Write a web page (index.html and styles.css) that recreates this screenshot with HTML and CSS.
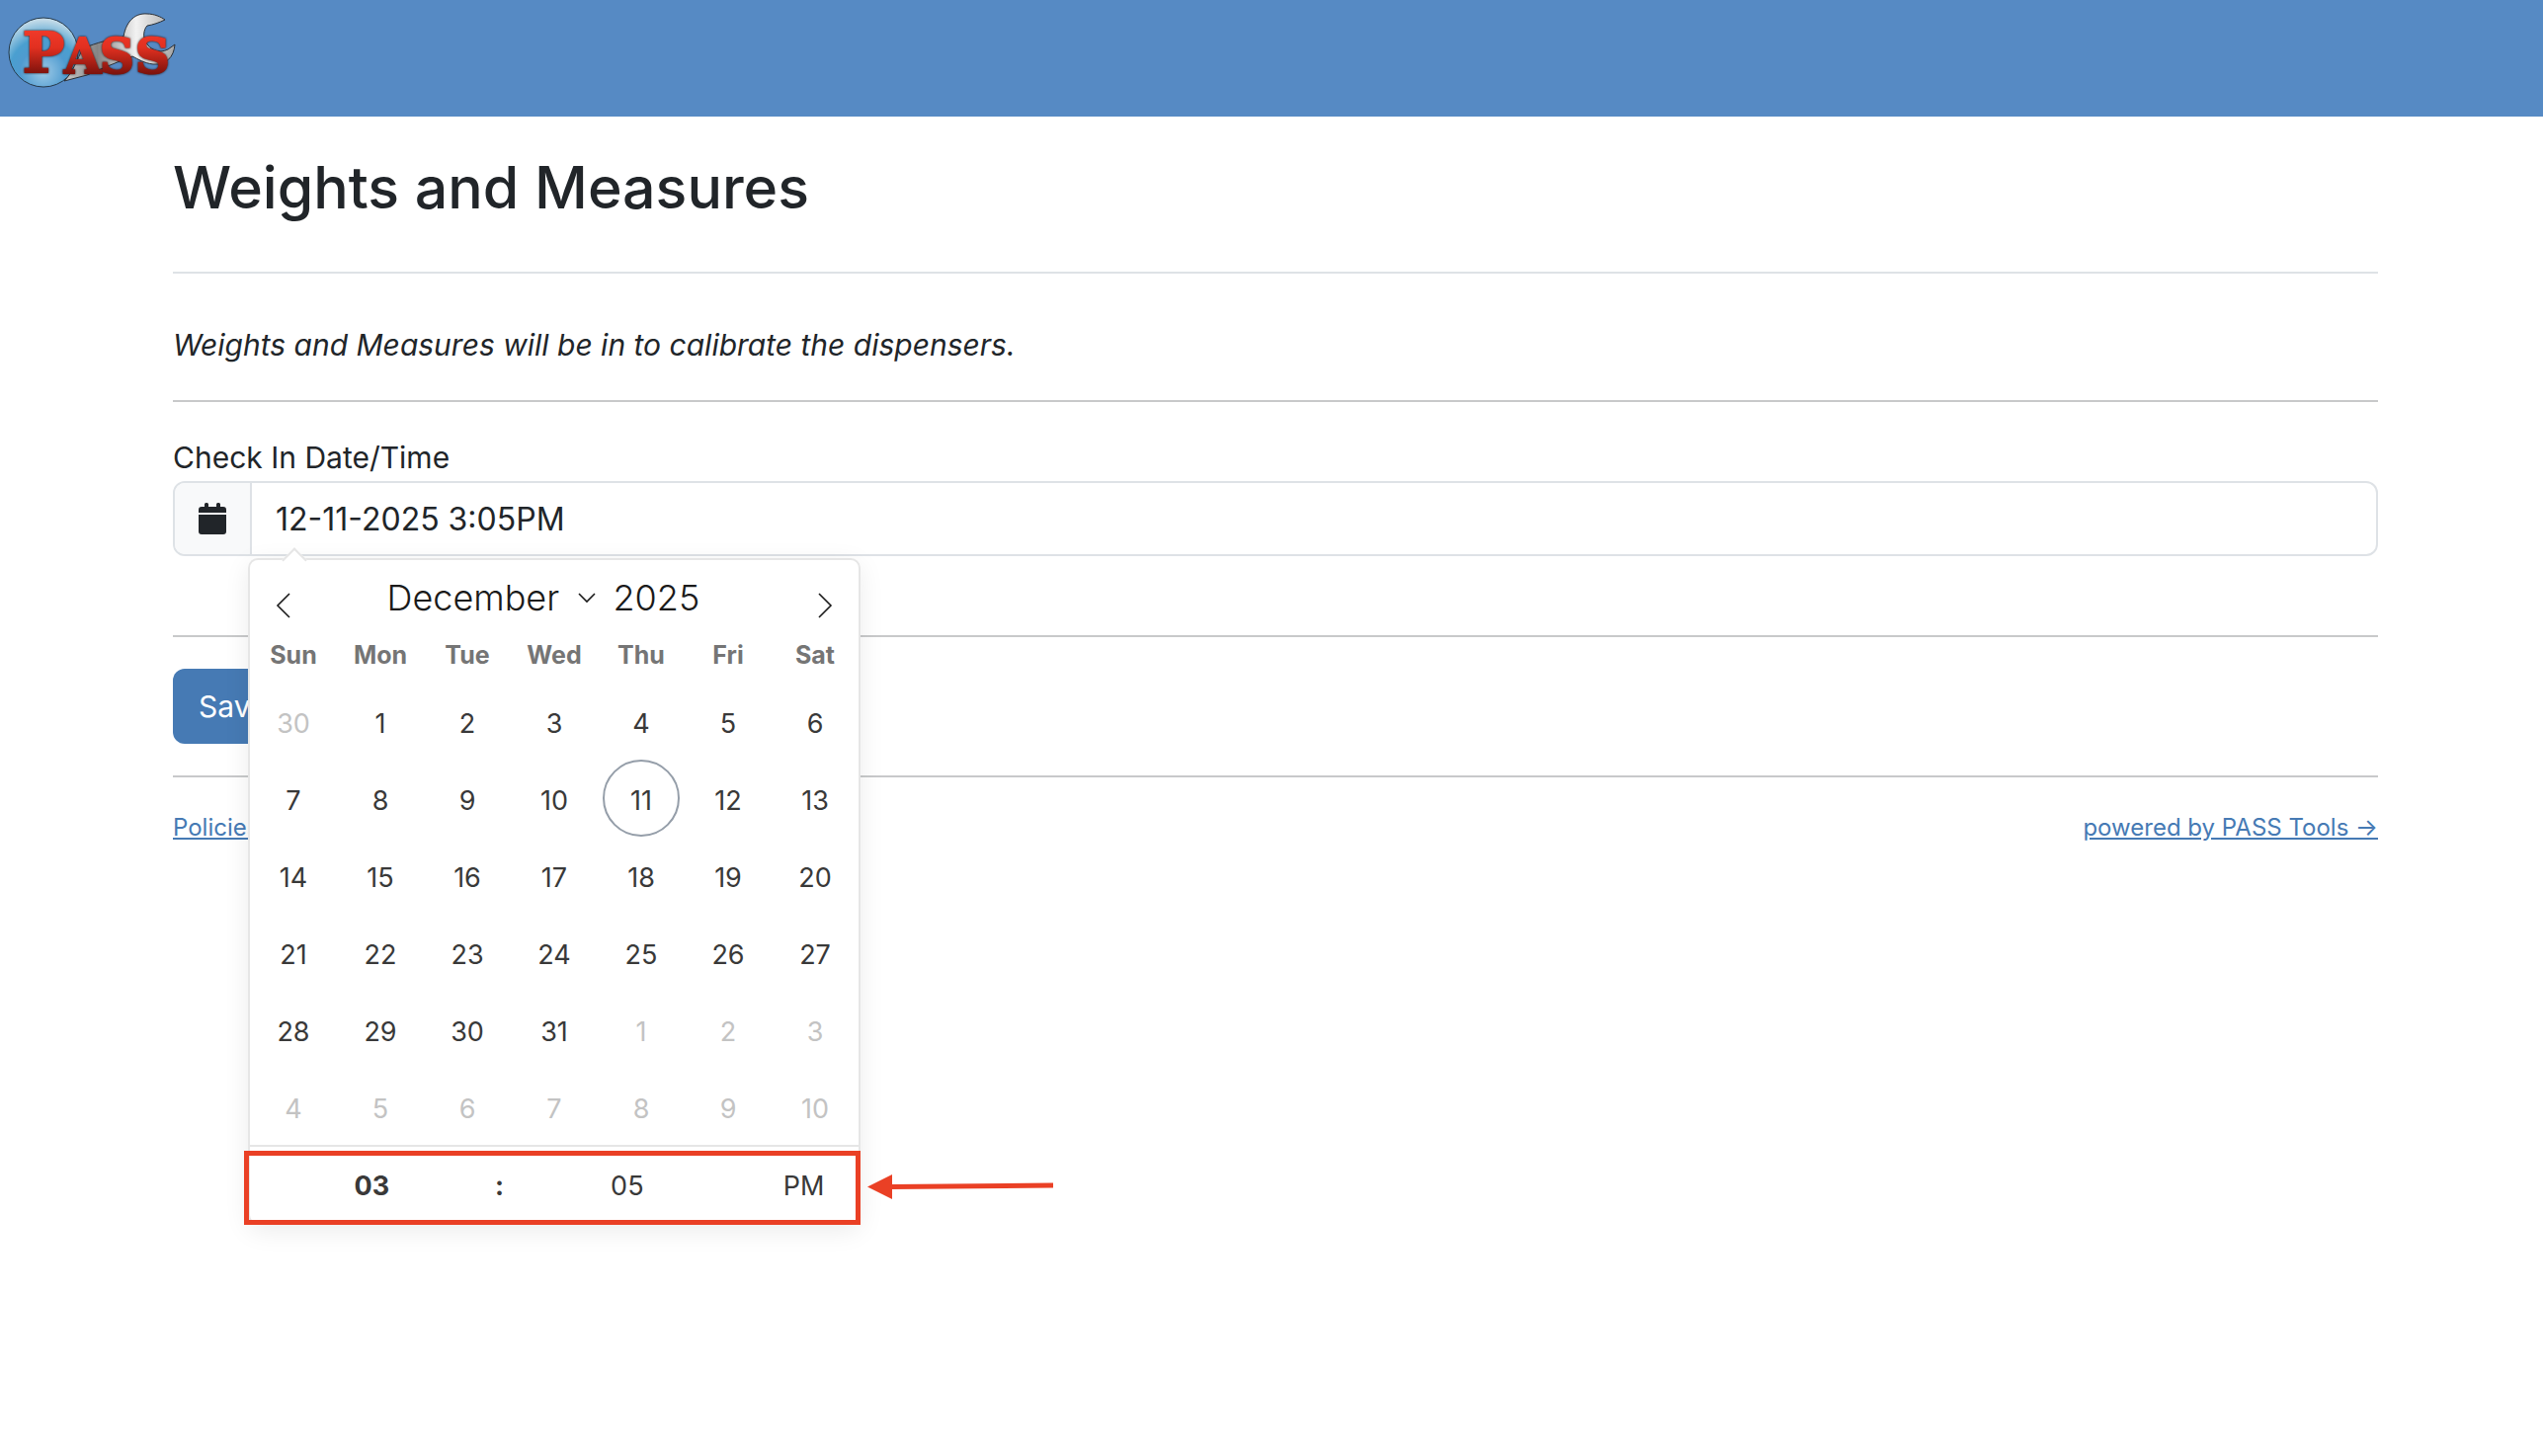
FILE: index.html
```html
<!DOCTYPE html>
<html lang="en">
<head>
<meta charset="utf-8">
<meta name="viewport" content="width=device-width, initial-scale=1">
<title>Weights and Measures</title>
<link rel="stylesheet" href="styles.css">
</head>
<body>
	<header class="topbar">
		<a href="#" class="logo" aria-label="PASS">
			<svg width="180" height="96" viewBox="0 0 180 96">
				<defs>
					<radialGradient id="globe" cx="50%" cy="78%" r="75%">
						<stop offset="0" stop-color="#9cc9e6"/>
						<stop offset=".45" stop-color="#4f9bd0"/>
						<stop offset=".65" stop-color="#4a9fd0"/>
						<stop offset="1" stop-color="#c3dbe8"/>
					</radialGradient>
					<linearGradient id="steel" x1="0" y1="0" x2="1" y2="0">
						<stop offset="0" stop-color="#c9c9c9"/>
						<stop offset=".3" stop-color="#858585"/>
						<stop offset=".65" stop-color="#f2f2f2"/>
						<stop offset="1" stop-color="#a5a5a5"/>
					</linearGradient>
					<linearGradient id="red" x1="0" y1="30" x2="0" y2="75" gradientUnits="userSpaceOnUse">
						<stop offset="0" stop-color="#f03a2a"/>
						<stop offset=".4" stop-color="#e23020"/>
						<stop offset="1" stop-color="#7c120c"/>
					</linearGradient>
				</defs>
				<circle cx="44" cy="53" r="35" fill="url(#globe)" stroke="#25394a"/>
				<path d="M65 82 C74 73 78 60 84 49 C98 43 112 40 125 37 C128 20 138 13 149 14 C156 14 163 17 167 20 C161 23 155 25 149 26 C145 30 145 38 147 42 C152 50 160 55 170 50 L177 45 C176 58 168 66 155 65 C146 64 140 60 134 57 C118 63 102 70 88 76 Z" fill="url(#steel)" stroke="#2b3036" stroke-linejoin="round"/>
				<text class="logo_text" x="23 65 101 137" y="73 74 74 74" fill="url(#red)" stroke="url(#red)" stroke-width="2">P<tspan class="logo_small">ASS</tspan></text>
			</svg>
		</a>
	</header>

	<main class="container">
		<h1>Weights and Measures</h1>
		<hr class="light">
		<p class="notice">Weights and Measures will be in to calibrate the dispensers.</p>
		<hr>

		<form class="checkin">
			<label for="checkin">Check In Date/Time</label>
			<div class="input_group">
				<span class="addon">
					<svg width="28" height="32" viewBox="0 0 28 32" fill="#212529">
						<path d="M6 4V1.500a1.500 1.500 0 0 1 1.500-1.500h1a1.500 1.500 0 0 1 1.500 1.500V4h8V1.500a1.500 1.500 0 0 1 1.500-1.500h1a1.500 1.500 0 0 1 1.500 1.500V4h3a3 3 0 0 1 3 3v3H0V7a3 3 0 0 1 3-3z"/>
						<path d="M0 12h28v17a3 3 0 0 1-3 3H3a3 3 0 0 1-3-3z"/>
					</svg>
				</span>
				<input type="text" id="checkin" value="12-11-2025 3:05PM">

				<div class="calendar">
					<div class="months">
						<button type="button" class="nav" aria-label="Previous month">
							<svg width="16" height="28" viewBox="0 0 16 28"><path d="M14 2L2 14l12 12"/></svg>
						</button>
						<div class="current">
							<select class="month" aria-label="Month">
								<option>December</option>
							</select>
							<svg class="caret" width="18" height="12" viewBox="0 0 18 12"><path d="M1 2l8 8 8-8"/></svg>
							<input type="text" class="year" value="2025" aria-label="Year">
						</div>
						<button type="button" class="nav" aria-label="Next month">
							<svg width="16" height="28" viewBox="0 0 16 28"><path d="M2 2l12 12L2 26"/></svg>
						</button>
					</div>
					<table class="days">
						<thead>
							<tr><th>Sun</th><th>Mon</th><th>Tue</th><th>Wed</th><th>Thu</th><th>Fri</th><th>Sat</th></tr>
						</thead>
						<tbody>
							<tr><td class="other">30</td><td>1</td><td>2</td><td>3</td><td>4</td><td>5</td><td>6</td></tr>
							<tr><td>7</td><td>8</td><td>9</td><td>10</td><td class="selected"><span class="today">11</span></td><td>12</td><td>13</td></tr>
							<tr><td>14</td><td>15</td><td>16</td><td>17</td><td>18</td><td>19</td><td>20</td></tr>
							<tr><td>21</td><td>22</td><td>23</td><td>24</td><td>25</td><td>26</td><td>27</td></tr>
							<tr><td>28</td><td>29</td><td>30</td><td>31</td><td class="other">1</td><td class="other">2</td><td class="other">3</td></tr>
							<tr><td class="other">4</td><td class="other">5</td><td class="other">6</td><td class="other">7</td><td class="other">8</td><td class="other">9</td><td class="other">10</td></tr>
						</tbody>
					</table>
					<div class="time">
						<input type="text" class="hour" value="03" aria-label="Hour">
						<span class="colon">:</span>
						<input type="text" class="minute" value="05" aria-label="Minute">
						<button type="button" class="ampm">PM</button>
					</div>
					<div class="highlight"></div>
					<svg class="pointer" width="190" height="26" viewBox="0 0 190 26">
						<path d="M24 13.500L188 12" stroke="#ea4025" stroke-width="5"/>
						<path d="M0 13.500L25 1v25z" fill="#ea4025"/>
					</svg>
				</div>
			</div>
			<hr>
			<button type="submit" class="save">Save</button>
		</form>
		<hr>

		<footer class="footer">
			<a href="#">Policies</a>
			<a href="#">powered by PASS Tools →</a>
		</footer>
	</main>
</body>
</html>
```

FILE: styles.css
```css
*{box-sizing:border-box; margin:0; padding:0;}
body{min-height:100vh; background:#fff; color:#212529; font-family:Inter, "Liberation Sans", sans-serif; font-size:30px; line-height:48px;}
input, select, button{font:inherit; color:inherit; border:0; background:none;}
input{min-width:0; outline:0;}
svg{display:block;}
a{color:#467ab4;}

.topbar{height:118px; background:#568ac4;}
.logo{display:inline-block;}
.logo_text{font-family:"DejaVu Serif", serif; font-weight:bold; font-size:56px; filter:drop-shadow(0 0 1px #2a0d0c);}
.logo_small{font-size:48px;}

.container{padding:32px 167px 32px 175px;}
h1{font-size:59px; line-height:80px; font-weight:500; margin-bottom:45px;}
hr{border:0; height:2px; background:#c8c9ca; margin:32px 0;}
hr.light{background:#dee2e6; margin:45px 0 48px;}
.notice{font-style:italic;}

.checkin label{display:block;}
.input_group{display:flex; position:relative; height:76px; margin-bottom:80px; border:2px solid #dee2e6; border-radius:12px;}
.addon{display:flex; align-items:center; padding:0 24px; background:#f8f9fa; border-right:2px solid #dee2e6; border-radius:10px 0 0 10px;}
#checkin{flex:1; padding:2px 24px 0; font-size:32px;}
.save{height:76px; padding:0 26px; background:#467ab4; color:#fff; border-radius:12px;}
.footer{display:flex; justify-content:space-between; font-size:24px; line-height:38px;}

/* date picker */
.calendar{position:absolute; left:74px; top:76px; width:620px; background:#fff; border:2px solid #e6e6e6; border-radius:10px; box-shadow:0 6px 26px rgba(0,0,0,.08); font-size:27px; color:#393939;}
.calendar:before{content:""; position:absolute; left:36px; top:-9px; width:16px; height:16px; background:#fff; border:solid #e6e6e6; border-width:2px 0 0 2px; transform:rotate(45deg);}
.months{display:flex; justify-content:space-between; height:68px; padding:0 26px; color:#1a1a1a;}
.months path{fill:none; stroke:#1a1a1a; stroke-width:1.6;}
.nav{display:flex; align-items:center; padding-top:24px;}
.current{display:flex; align-items:center; font-size:36px; font-weight:300; padding-top:8px;}
.month{appearance:none;}
.caret{margin:0 18px;}
.year{width:110px;}
.days{width:100%; table-layout:fixed; border-collapse:collapse;}
.days th{height:56px; font-size:25px; font-weight:700; color:#757575;}
.days td{height:78px; padding-top:6px; text-align:center;}
.days .other{color:#c3c3c3;}
.days .selected{padding:0;}
.today{display:block; width:78px; height:78px; line-height:80px; margin:0 auto; border:2px solid #959ea9; border-radius:50%;}
.time{display:flex; align-items:center; height:79px; padding-top:2px; border-top:2px solid #e6e6e6;}
.time input{flex:1; text-align:center;}
.hour, .colon{font-weight:700;}
.colon{width:12px; text-align:center;}
.ampm{width:18%;}

.highlight{position:absolute; left:-6px; right:-2px; bottom:-2px; height:75px; border:5px solid #ea4025;}
.pointer{position:absolute; left:625px; bottom:24px;}
```
